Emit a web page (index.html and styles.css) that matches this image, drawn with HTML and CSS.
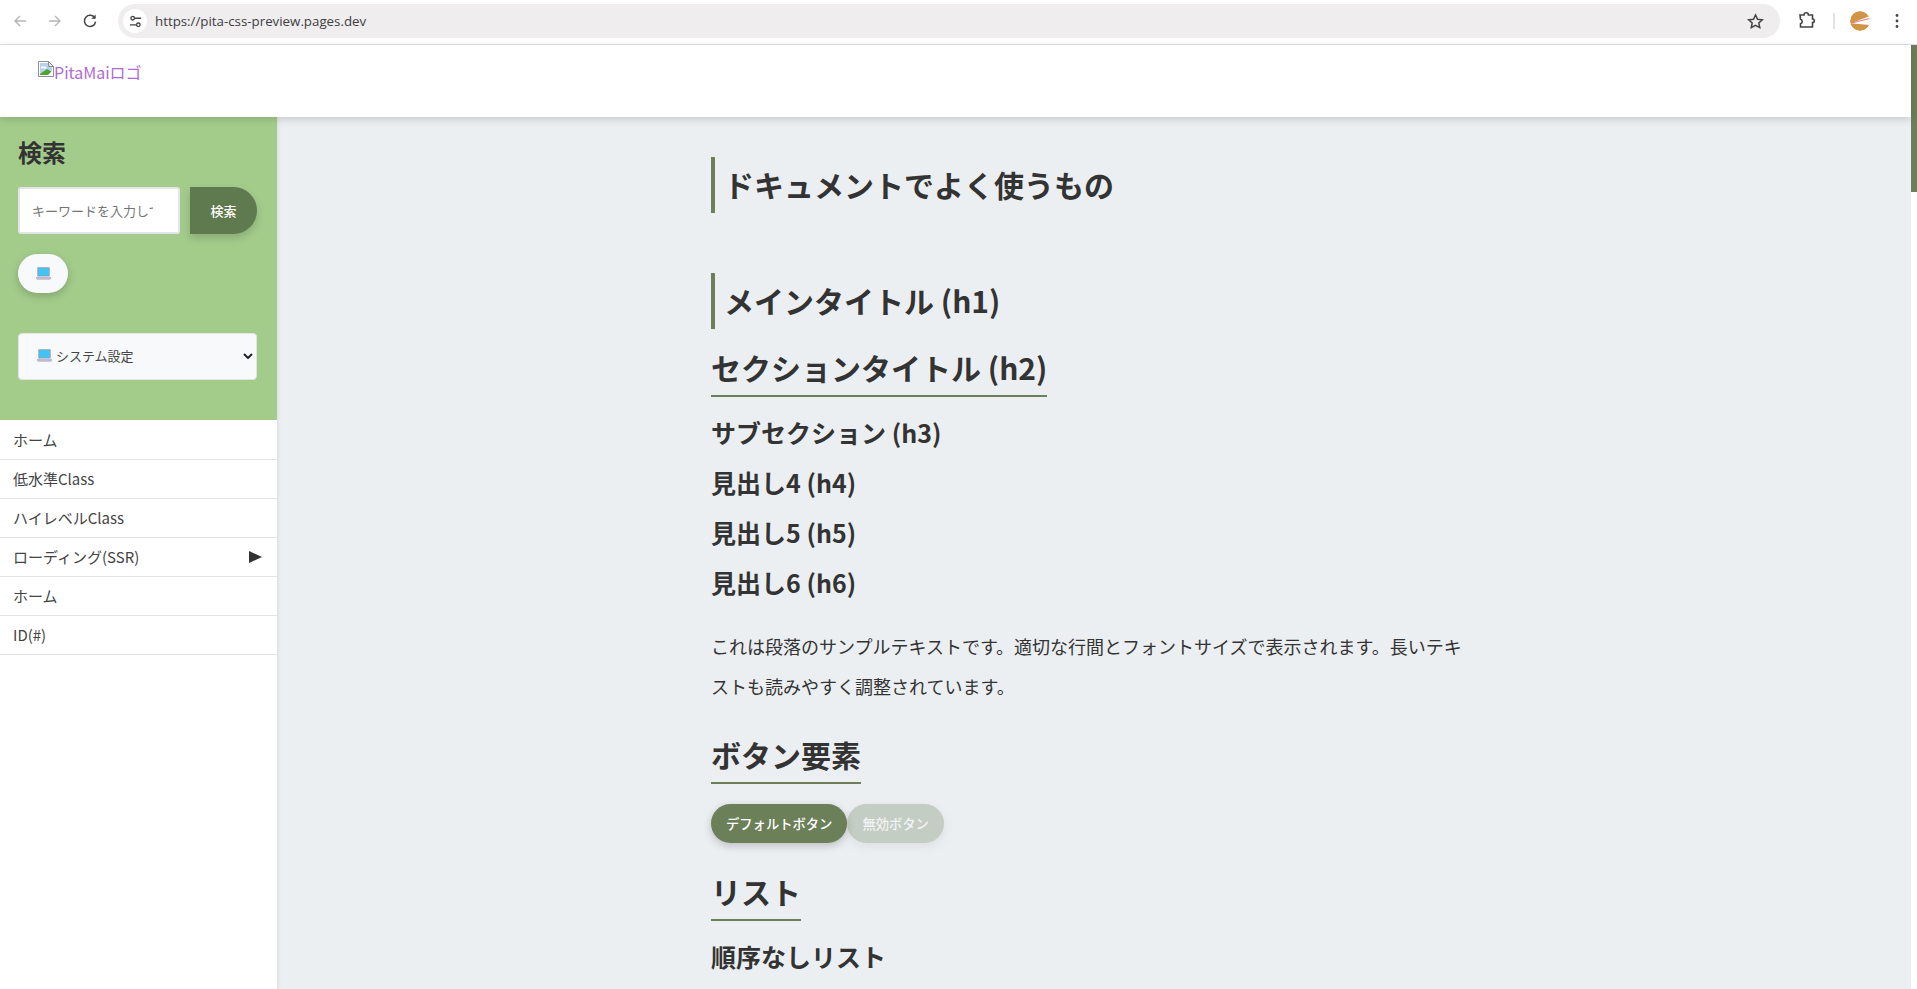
FILE: index.html
```html
<!DOCTYPE html>
<html lang="ja">
<head>
<meta charset="utf-8">
<title>PitaMai</title>
<link rel="stylesheet" href="styles.css">
</head>
<body>
<div class="toolbar">
  <div class="nav-btns">
    <svg class="tb-icon" viewBox="0 0 16 16"><path d="M14 8H3M8 3 3 8l5 5" class="st-dis"/></svg>
    <svg class="tb-icon" viewBox="0 0 16 16"><path d="M2 8h11M8 3l5 5-5 5" class="st-dis"/></svg>
    <svg class="tb-icon" viewBox="0 0 16 16"><path d="M13 5.2A5.600 5.600 0 1 0 13.600 8.600" class="st-dark"/><path d="M13.600 1.600v4.200H9.400z" class="fill-dark"/></svg>
  </div>
  <div class="omnibox">
    <span class="tune">
      <svg viewBox="0 0 16 16" class="tune-svg"><circle cx="5" cy="4.500" r="1.900" class="st-thin"/><path d="M7 4.500h7M2 11.500h7" class="st-thin"/><circle cx="11" cy="11.500" r="1.900" class="st-thin"/></svg>
    </span>
    <span class="url">https://pita-css-preview.pages.dev</span>
    <svg class="star" viewBox="0 0 16 16"><path d="M8 1.800l1.900 4.100 4.500.5-3.300 3 .9 4.400L8 11.600l-4 2.200.9-4.400-3.300-3 4.500-.5z" class="st-thin"/></svg>
  </div>
  <div class="tb-right">
    <svg class="ext" viewBox="0 0 20 20"><path d="M3 4h4a2.200 2.200 0 0 1 4.400 0H15.500v4a1.800 1.800 0 0 1 0 3.600V16H3.500v-3.200a2.400 2.400 0 0 0 0-4.600z" class="st-ext"/></svg>
    <span class="tb-sep"></span>
    <svg class="avatar" viewBox="0 0 20 20"><circle cx="10" cy="10" r="10" fill="#d09442"/><path d="M.7 12.300 20 5v9z" fill="#fff"/><path d="M1.500 12 19.500 7.500" stroke="#e2708a" stroke-width="1" fill="none"/><circle cx="12" cy="3" r=".7" fill="#8fa3b5"/></svg>
    <svg class="kebab" viewBox="0 0 4 16"><circle cx="2" cy="2.500" r="1.400"/><circle cx="2" cy="8" r="1.400"/><circle cx="2" cy="13.500" r="1.400"/></svg>
  </div>
</div>

<div class="viewport">
  <div class="page">
    <header class="site-header">
      <a class="logo" href="#">
        <svg class="broken" viewBox="0 0 16 16"><path d="M.5.500h10l5 5v10H.5z" fill="#fff" stroke="#8f8f8f"/><path d="M10.500.500v5h5z" fill="#e4e6ea" stroke="#8f8f8f"/><path d="M2 2h8v4h4v8H2z" fill="#b7cff0"/><path d="M3 5.500h5l1 2H3z" fill="#fff"/><path d="M2 14v-1l7-5 5 3v3z" fill="#4ea431"/><path d="M9 15 15 9v6z" fill="#fff"/></svg><span>PitaMaiロゴ</span>
      </a>
    </header>
    <div class="body-row">
      <aside class="sidebar">
        <div class="search-panel">
          <h2 class="search-title">検索</h2>
          <form class="search-form">
            <input class="search-input" type="text" placeholder="キーワードを入力して">
            <button class="search-btn" type="button">検索</button>
          </form>
          <button class="theme-toggle" type="button">
            <svg class="laptop" viewBox="0 0 17 14"><rect x="1.500" width="14" height="10.500" rx=".5" fill="#8d9db4"/><rect x="2.500" y="1" width="12" height="8.500" fill="#3fc4f5"/><path d="M0 11h17v1.500l-1 1.500H1l-1-1.500z" fill="#bfb8cf"/></svg>
          </button>
          <div class="theme-select">
            <svg class="laptop" viewBox="0 0 17 14"><rect x="1.500" width="14" height="10.500" rx=".5" fill="#8d9db4"/><rect x="2.500" y="1" width="12" height="8.500" fill="#3fc4f5"/><path d="M0 11h17v1.500l-1 1.500H1l-1-1.500z" fill="#bfb8cf"/></svg>
            <span class="select-label">システム設定</span>
            <svg class="chevron" viewBox="0 0 10 6"><path d="M1 1l4 4 4-4"/></svg>
          </div>
        </div>
        <nav class="side-nav">
          <a class="nav-item">ホーム</a>
          <a class="nav-item">低水準Class</a>
          <a class="nav-item">ハイレベルClass</a>
          <a class="nav-item">ローディング(SSR)<span class="arrow"></span></a>
          <a class="nav-item">ホーム</a>
          <a class="nav-item">ID(#)</a>
        </nav>
      </aside>
      <main class="content">
        <div class="article">
          <h1 class="title page-title">ドキュメントでよく使うもの</h1>
          <h1 class="title">メインタイトル (h1)</h1>
          <h2 class="section">セクションタイトル (h2)</h2>
          <h3 class="sub">サブセクション (h3)</h3>
          <h4 class="sub">見出し4 (h4)</h4>
          <h5 class="sub">見出し5 (h5)</h5>
          <h6 class="sub">見出し6 (h6)</h6>
          <p class="para">これは段落のサンプルテキストです。適切な行間とフォントサイズで表示されます。長いテキストも読みやすく調整されています。</p>
          <h2 class="section buttons-title">ボタン要素</h2>
          <div class="btn-row">
            <button class="btn" type="button">デフォルトボタン</button>
            <button class="btn btn-disabled" type="button">無効ボタン</button>
          </div>
          <h2 class="section list-title">リスト</h2>
          <h3 class="sub">順序なしリスト</h3>
        </div>
      </main>
    </div>
  </div>
  <div class="scrollbar"><div class="thumb"></div></div>
</div>
</body>
</html>
```
FILE: styles.css
```css
* { box-sizing: border-box; }
html, body { margin: 0; height: 100%; overflow: hidden; }
body {
  display: flex;
  flex-direction: column;
  font-family: "Noto Sans CJK JP", "Noto Sans", sans-serif;
  color: #333;
  background: #fff;
}

/* browser chrome */
.toolbar {
  height: 45px;
  flex: none;
  display: flex;
  align-items: center;
  background: #fff;
  border-bottom: 1px solid #e2e2e2;
  padding-bottom: 2px;
}
.nav-btns { display: flex; align-items: center; gap: 19px; padding-left: 12px; width: 118px; }
.tb-icon { width: 16px; height: 16px; }
.st-dis { fill: none; stroke: #b5b5b5; stroke-width: 1.4; }
.st-dark { fill: none; stroke: #444; stroke-width: 1.5; }
.fill-dark { fill: #444; }
.st-thin { fill: none; stroke: #444; stroke-width: 1.4; }
.st-ext { fill: none; stroke: #444; stroke-width: 1.6; }
.omnibox {
  width: 1662px;
  height: 34px;
  border-radius: 17px;
  background: #efedee;
  display: flex;
  align-items: center;
  padding-left: 5px;
  padding-right: 16px;
}
.tune {
  width: 24px;
  height: 24px;
  border-radius: 50%;
  background: #fff;
  display: flex;
  align-items: center;
  justify-content: center;
}
.tune-svg { width: 15px; height: 15px; }
.url {
  margin-left: 8px;
  font: 13.300px "Open Sans", "Liberation Sans", sans-serif;
  color: #3c4043;
  flex: 1;
}
.star { width: 17px; height: 17px; }
.tb-right { display: flex; align-items: center; padding-left: 17px; }
.ext { width: 20px; height: 20px; }
.tb-sep { width: 2px; height: 16px; background: #e3e3e3; margin: 0 15px 0 16px; }
.avatar { width: 20px; height: 20px; border-radius: 50%; }
.kebab { width: 4px; height: 16px; margin-left: 25px; fill: #444; }

/* page frame */
.viewport { flex: 1; min-height: 0; display: flex; }
.page { flex: 1; min-width: 0; display: flex; flex-direction: column; }
.scrollbar { width: 6px; flex: none; background: #fff; }
.thumb { height: 147px; background: #6b8059; }

.site-header {
  height: 72px;
  flex: none;
  background: #fff;
  padding: 13px 0 0 38px;
  box-shadow: 0 2px 8px rgba(0, 0, 0, .16);
  position: relative;
  z-index: 2;
}
.logo {
  display: inline-flex;
  align-items: flex-end;
  color: #b06ad8;
  font-size: 16px;
  line-height: 24px;
  text-decoration: none;
}
.broken { width: 16px; height: 16px; margin-bottom: 7px; }

.body-row { flex: 1; min-height: 0; display: flex; }
.sidebar {
  width: 277px;
  flex: none;
  background: #fff;
  box-shadow: 1px 0 4px rgba(0, 0, 0, .08);
  position: relative;
  z-index: 1;
}
.search-panel { height: 303px; background: #a3cc8b; padding: 18px 20px 0 18px; }
.search-title { margin: 0 0 18px; font-size: 24px; line-height: 34px; font-weight: 700; color: #333; }
.search-form { display: flex; gap: 10px; }
.search-input {
  width: 162px;
  height: 47px;
  padding: 0 25px 0 12px;
  border: 2px solid #e3e3e8;
  border-radius: 3px;
  background: #fff;
  font: 13px "Noto Sans CJK JP", sans-serif;
  color: #333;
  outline: none;
}
.search-input::placeholder { color: #757575; opacity: 1; }
.search-btn {
  width: 67px;
  height: 47px;
  padding: 0;
  border: 0;
  border-radius: 0 24px 24px 0;
  background: #5f7a4e;
  color: #fff;
  font: 500 13px "Noto Sans CJK JP", sans-serif;
  box-shadow: 0 4px 8px rgba(0, 0, 0, .16);
}
.theme-toggle {
  display: flex;
  align-items: center;
  justify-content: center;
  width: 50px;
  height: 39px;
  margin-top: 20px;
  padding: 0;
  border: 0;
  border-radius: 20px;
  background: #f8f9fb;
  box-shadow: 0 3px 8px rgba(0, 0, 0, .2);
}
.laptop { width: 15px; height: 13px; flex: none; }
.theme-select {
  display: flex;
  align-items: center;
  width: 239px;
  height: 47px;
  margin-top: 40px;
  padding: 0 2px 2px 18px;
  border: 1px solid #e3e3e8;
  border-radius: 4px;
  background: #f8f9fb;
}
.select-label { margin-left: 4px; flex: 1; font-size: 13px; color: #444; }
.chevron { width: 10px; height: 6px; fill: none; stroke: #222; stroke-width: 2; margin-right: 1px; }

.side-nav { padding-top: 1px; }
.nav-item {
  display: flex;
  align-items: center;
  justify-content: space-between;
  height: 39px;
  padding: 0 18px 1px 13px;
  border-bottom: 1px solid #e3e3e3;
  font-size: 15px;
  color: #444;
}
.arrow {
  width: 0;
  height: 0;
  border-left: 13px solid #333;
  border-top: 6.500px solid transparent;
  border-bottom: 6.500px solid transparent;
  margin-right: -3px;
}

/* article */
.content { flex: 1; min-width: 0; background: #ebeff2; overflow: hidden; padding-top: 40px; }
.article { width: 766px; margin: 0 auto; }
.title {
  margin: 0;
  height: 56px;
  padding-left: 9px;
  border-left: 4px solid #6b8059;
  font-size: 30px;
  line-height: 54px;
  font-weight: 700;
  color: #333;
}
.page-title { margin-bottom: 60px; }
.section {
  display: table;
  margin: 20px 0 0;
  padding-bottom: 10px;
  border-bottom: 2px solid #6b8059;
  font-size: 30px;
  line-height: 36px;
  font-weight: 700;
  color: #333;
}
.sub { margin: 20px 0 0; font-size: 25px; line-height: 30px; font-weight: 700; color: #333; }
.para { margin: 29px 0 0; font-size: 18px; line-height: 40px; color: #333; }
.buttons-title { margin-top: 30px; }
.btn-row { display: flex; margin-top: 20px; }
.btn {
  height: 39px;
  padding: 0 15px;
  border: 0;
  border-radius: 20px;
  background: #6b8059;
  color: #fff;
  font: 500 13.300px "Noto Sans CJK JP", sans-serif;
  box-shadow: 0 3px 8px rgba(0, 0, 0, .2);
}
.btn-disabled { opacity: .3; }
.list-title { margin-top: 30px; }
```
